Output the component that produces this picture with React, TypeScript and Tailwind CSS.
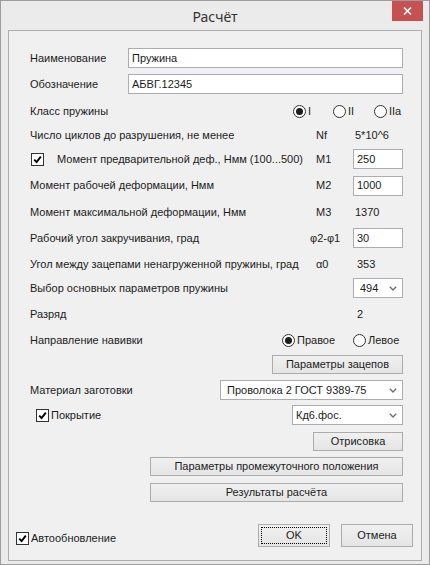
import React from 'react';

type Props = { className?: string; children?: React.ReactNode };

// WinForms-style controls
const CheckBox = ({ className = '' }: { className?: string }) => (
  <span className={`flex h-[13px] w-[13px] shrink-0 items-center justify-center border border-[#333] bg-white ${className}`}>
    <svg width="9" height="9" viewBox="0 0 9 9">
      <path d="M1.2 4.6 L3.6 7 L7.8 1.6" fill="none" stroke="#000" strokeWidth="1.9" />
    </svg>
  </span>
);

const Radio = ({ checked = false }: { checked?: boolean }) => (
  <span className="flex h-[13px] w-[13px] shrink-0 items-center justify-center rounded-full border border-[#333] bg-white">
    {checked && <span className="h-[7px] w-[7px] rounded-full bg-[#1e1e1e]" />}
  </span>
);

const TextBox = ({ value, className = '' }: { value: string; className?: string }) => (
  <div className={`flex h-[20px] items-center border border-[#abadb3] bg-white pl-[3px] ${className}`}>{value}</div>
);

const ComboBox = ({ value, className = '', pad = 'pl-[6px]' }: { value: string; className?: string; pad?: string }) => (
  <div className={`flex h-[20px] items-center justify-between border border-[#abadb3] bg-white pr-[5px] ${pad} ${className}`}>
    <span>{value}</span>
    <svg width="8" height="5" viewBox="0 0 8 5">
      <path d="M0.8 0.8 L4 4 L7.2 0.8" fill="none" stroke="#707070" strokeWidth="1.4" />
    </svg>
  </div>
);

const Button = ({ className = '', children }: Props) => (
  <button className={`flex items-center justify-center border border-[#acacac] bg-gradient-to-b from-[#f0f0f0] to-[#e5e5e5] text-[11px] ${className}`}>
    {children}
  </button>
);

// label | symbol | value
const ParamRow = ({
  label,
  symbol,
  h,
  children,
  symPad = 'pl-[6px]',
}: {
  label: React.ReactNode;
  symbol?: string;
  h: string;
  children?: React.ReactNode;
  symPad?: string;
}) => (
  <div className={`flex items-center ${h}`}>
    <div className="flex flex-1 items-center">{label}</div>
    <div className={`w-[43px] ${symPad}`}>{symbol}</div>
    <div className="w-[50px]">{children}</div>
  </div>
);

export default function App() {
  return (
    <div className="h-[565px] w-[430px] bg-white">
      <div className="flex h-[565px] w-[430px] flex-col border border-[#9c9c9c] bg-[#ebebeb] font-['Liberation_Sans',Arial,sans-serif] text-[11px] text-[#1c1c1c]">
        {/* title bar */}
        <div className="grid h-[29px] grid-cols-[1fr_auto_1fr]">
          <div />
          <div className="self-center pt-[1px] font-['Noto_Sans',sans-serif] text-[14px] text-[#333]">Расчёт</div>
          <div className="flex justify-end pr-[6px]">
            <div className="flex h-[20px] w-[31px] items-center justify-center bg-[#c75050]">
              <svg width="9" height="8" viewBox="0 0 9 8">
                <path d="M1 0.5 L8 7.5 M8 0.5 L1 7.5" stroke="#fff" strokeWidth="1.6" />
              </svg>
            </div>
          </div>
        </div>

        {/* client area */}
        <div className="mx-[7px] flex h-[531px] flex-col border border-[#adadad] bg-[#f0f0f0]">
          <div className="flex flex-col pl-[21px] pr-[18px] pt-[17px]">
            <div className="flex h-[20px] items-center">
              <div className="w-[98px]">Наименование</div>
              <TextBox value="Пружина" className="flex-1" />
            </div>
            <div className="mt-[6px] flex h-[20px] items-center">
              <div className="w-[98px]">Обозначение</div>
              <TextBox value="АБВГ.12345" className="flex-1" />
            </div>

            <div className="mt-[4px] flex h-[26px] items-center">
              <div className="flex-1">Класс пружины</div>
              <div className="flex w-[40px] items-center gap-[2px]">
                <Radio checked />
                <span>I</span>
              </div>
              <div className="flex w-[41px] items-center gap-[2px]">
                <Radio />
                <span>II</span>
              </div>
              <div className="flex w-[29px] items-center gap-[2px]">
                <Radio />
                <span>IIa</span>
              </div>
            </div>

            <ParamRow h="h-[22px]" label="Число циклов до разрушения, не менее" symbol="Nf">
              <span className="pl-[2px]">5*10^6</span>
            </ParamRow>
            <ParamRow
              h="h-[26px]"
              label={
                <>
                  <CheckBox className="ml-[1px]" />
                  <span className="ml-[13px]">Момент предварительной деф., Нмм (100...500)</span>
                </>
              }
              symbol="M1"
            >
              <TextBox value="250" />
            </ParamRow>
            <ParamRow h="h-[27px]" label="Момент рабочей деформации, Нмм" symbol="M2">
              <TextBox value="1000" />
            </ParamRow>
            <ParamRow h="h-[26px]" label="Момент максимальной деформации, Нмм" symbol="M3">
              <span className="pl-[2px]">1370</span>
            </ParamRow>
            <ParamRow h="h-[26px]" label="Рабочий угол закручивания, град" symbol="φ2-φ1" symPad="pl-0">
              <TextBox value="30" />
            </ParamRow>
            <ParamRow h="h-[26px]" label="Угол между зацепами ненагруженной пружины, град" symbol="α0">
              <span className="pl-[4px]">353</span>
            </ParamRow>
            <ParamRow h="h-[22px]" label="Выбор основных параметров пружины">
              <ComboBox value="494" />
            </ParamRow>
            <ParamRow h="h-[30px]" label="Разряд">
              <span className="pl-[4px]">2</span>
            </ParamRow>

            <div className="flex h-[22px] items-center">
              <div className="flex-1">Направление навивки</div>
              <div className="flex w-[71px] items-center gap-[2px]">
                <Radio checked />
                <span>Правое</span>
              </div>
              <div className="flex w-[50px] items-center gap-[2px]">
                <Radio />
                <span>Левое</span>
              </div>
            </div>

            <Button className="mt-[4px] h-[19px] w-[131px] self-end">Параметры зацепов</Button>

            <div className="mt-[6px] flex h-[20px] items-center">
              <div className="flex-1">Материал заготовки</div>
              <ComboBox value="Проволока 2 ГОСТ 9389-75" className="w-[183px]" />
            </div>
            <div className="mt-[5px] flex h-[20px] items-center">
              <div className="flex flex-1 items-center">
                <CheckBox className="ml-[6px]" />
                <span className="ml-[2px]">Покрытие</span>
              </div>
              <ComboBox value="Кд6.фос." className="w-[111px]" pad="pl-[3px]" />
            </div>

            <Button className="mt-[7px] h-[19px] w-[90px] self-end">Отрисовка</Button>
            <Button className="mt-[6px] h-[19px] w-[253px] self-end">Параметры промежуточного положения</Button>
            <Button className="mt-[7px] h-[19px] w-[253px] self-end">Результаты расчёта</Button>
          </div>

          <div className="flex-1" />

          {/* footer */}
          <div className="flex items-center pb-[13px] pl-[7px] pr-[8px]">
            <div className="mt-[5px] flex flex-1 items-center gap-[2px]">
              <CheckBox />
              <span>Автообновление</span>
            </div>
            <Button className="h-[23px] w-[72px] border-[#3c7fb1] p-[2px]">
              <span className="flex h-full w-full items-center justify-center border border-dotted border-black">OK</span>
            </Button>
            <Button className="ml-[11px] h-[23px] w-[72px]">Отмена</Button>
          </div>
        </div>
      </div>
    </div>
  );
}
